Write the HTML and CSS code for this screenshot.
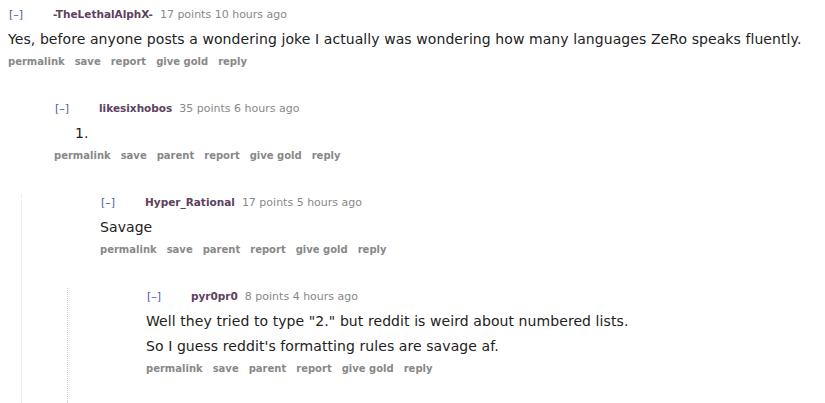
FILE: index.html
```html
<!DOCTYPE html>
<html>
<head>
<meta charset="utf-8">
<link rel="stylesheet" href="styles.css">
</head>
<body>
<div class="comment">
  <div class="tagline"><a class="expand">[–]</a><a class="author">-TheLethalAlphX-</a><span class="meta">17 points 10 hours ago</span></div>
  <div class="md"><p>Yes, before anyone posts a wondering joke I actually was wondering how many languages ZeRo speaks fluently.</p></div>
  <ul class="buttons"><li>permalink</li><li>save</li><li>report</li><li>give gold</li><li>reply</li></ul>
  <div class="child">
    <div class="comment">
      <div class="tagline"><a class="expand">[–]</a><a class="author">likesixhobos</a><span class="meta">35 points 6 hours ago</span></div>
      <div class="md"><ol><li></li></ol></div>
      <ul class="buttons"><li>permalink</li><li>save</li><li>parent</li><li>report</li><li>give gold</li><li>reply</li></ul>
      <div class="child">
        <div class="comment">
          <div class="tagline"><a class="expand">[–]</a><a class="author">Hyper_Rational</a><span class="meta">17 points 5 hours ago</span></div>
          <div class="md"><p>Savage</p></div>
          <ul class="buttons"><li>permalink</li><li>save</li><li>parent</li><li>report</li><li>give gold</li><li>reply</li></ul>
          <div class="child deep">
            <div class="comment last">
              <div class="tagline"><a class="expand">[–]</a><a class="author">pyr0pr0</a><span class="meta">8 points 4 hours ago</span></div>
              <div class="md"><p>Well they tried to type "2." but reddit is weird about numbered lists.</p><p>So I guess reddit's formatting rules are savage af.</p></div>
              <ul class="buttons"><li>permalink</li><li>save</li><li>parent</li><li>report</li><li>give gold</li><li>reply</li></ul>
            </div>
          </div>
        </div>
      </div>
    </div>
  </div>
</div>
</body>
</html>
```

FILE: styles.css
```css
html, body {
  margin: 0;
  padding: 0;
  background: #ffffff;
}
body {
  padding: 6px 0 0 8px;
  font-family: "DejaVu Sans", Verdana, sans-serif;
  color: #222222;
  overflow: hidden;
}
.tagline {
  font-size: 11px;
  line-height: 16px;
  color: #888888;
  white-space: nowrap;
}
.expand {
  display: inline-block;
  width: 45px;
  padding-left: 1px;
  box-sizing: border-box;
  color: #4a5aa8;
}
.author {
  color: #5d4260;
  font-weight: bold;
  font-size: 10.5px;
  margin-right: 7px;
}
.md {
  font-size: 14px;
  letter-spacing: 0.08px;
  margin-top: 6px;
}
.md p {
  margin: 5px 0;
  line-height: 20px;
}
.md ol {
  margin: 5px 0;
  padding-left: 39px;
  line-height: 20px;
}
.md li {
  min-height: 20px;
}
.buttons {
  list-style: none;
  margin: 7px 0 32px 0;
  padding: 0;
  display: flex;
  gap: 10px;
  font-size: 10px;
  font-weight: bold;
  line-height: 12px;
  color: #888888;
}
.child {
  margin-left: -33px;
  padding-left: 78px;
  border-left: 1px dotted #dedeea;
}
.child.deep {
  border-left-color: #c8c8f4;
}
.comment.last {
  padding-bottom: 40px;
}
```
